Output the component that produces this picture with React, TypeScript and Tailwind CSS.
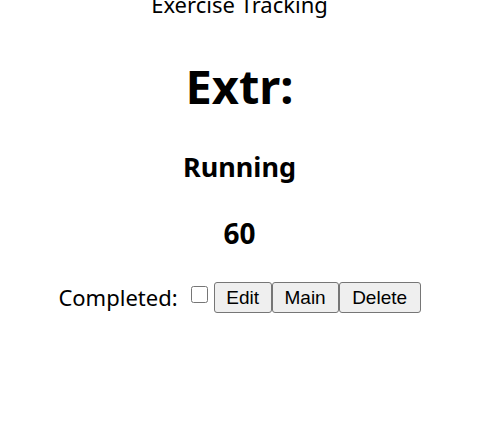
export default function App() {
  const btn =
    "h-[31px] rounded-[3px] border border-[#767676] bg-[#efefef] text-[19px] text-black leading-none px-[6px]";
  return (
    <div
      className="w-[479px] text-center text-black bg-white h-[423px] overflow-hidden"
      style={{ fontFamily: '"Noto Sans", "Segoe UI", sans-serif' }}
    >
      <p className="text-[22px] leading-[32px] mt-[-12px]">Exercise Tracking</p>
      <h1 className="text-[47px] font-bold leading-[56px] mt-[38px]">Extr:</h1>
      <h3 className="text-[27px] font-bold leading-[36px] mt-[35px]">Running</h3>
      <h3 className="text-[28px] font-bold leading-[36px] mt-[30px]">60</h3>
      <div className="flex items-center justify-center mt-[30px]">
        <span className="text-[22px] leading-[32px]">Completed:</span>
        <input
          type="checkbox"
          className="block shrink-0 w-[17px] h-[17px] ml-[13px] mr-[6px] mb-[5px]"
        />
        <div className="flex" style={{ fontFamily: '"Liberation Sans", Arial, sans-serif' }}>
          <button className={btn + " w-[58px]"}>Edit</button>
          <button className={btn + " w-[67px]"}>Main</button>
          <button className={btn + " w-[82px]"}>Delete</button>
        </div>
      </div>
    </div>
  );
}
